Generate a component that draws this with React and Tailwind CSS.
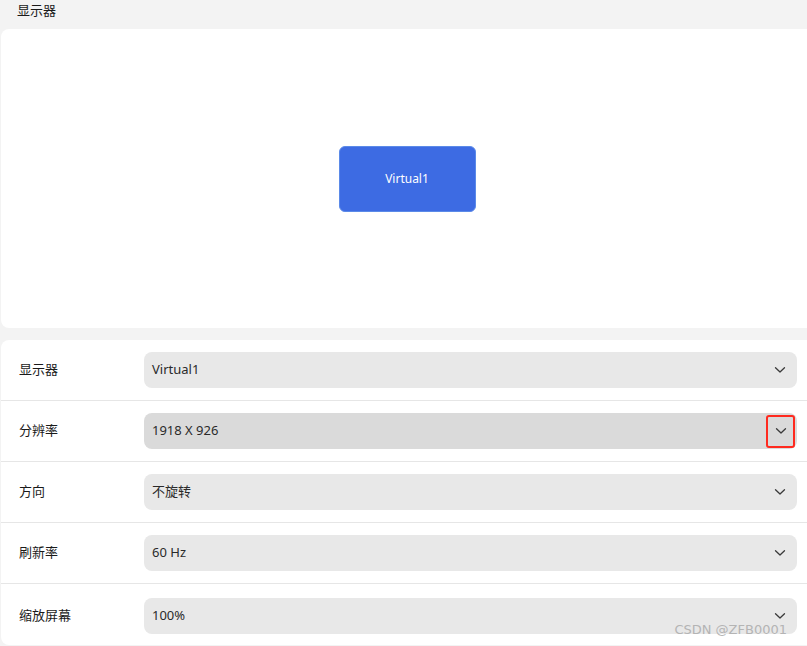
import React from 'react';

const font = { fontFamily: '"Noto Sans", "Noto Sans CJK SC", sans-serif' };

const Chevron = () => (
    <svg width="12" height="8" viewBox="0 0 12 8" fill="none">
        <path d="M1.5 1.8 L6 6 L10.5 1.8" stroke="#3a3a3a" strokeWidth="1.3" strokeLinecap="round" strokeLinejoin="round" />
    </svg>
);

const rows = [
    { label: '显示器', value: 'Virtual1' },
    { label: '分辨率', value: '1918 X 926', active: true },
    { label: '方向', value: '不旋转' },
    { label: '刷新率', value: '60 Hz' },
    { label: '缩放屏幕', value: '100%', pad: 'pt-[2px]' },
];

const Row = ({ label, value, active, last, pad }) => (
    <div className={"flex items-center h-[61px] pl-[18px] pr-[10px] " + (pad || "") + (last ? "" : " border-b border-[#e6e6e6]")}>
        <div className="w-[125px] text-[13px] text-[#1a1a1a]">{label}</div>
        <div
            className={
                "flex-1 h-[36px] rounded-lg flex items-center justify-between pl-2 pr-[11px] text-[13px] text-[#2a2a2a] " +
                (active ? "bg-[#dadada]" : "bg-[#e8e8e8]")
            }
        >
            <span>{value}</span>
            {active ? (
                <span className="relative -mr-[9px] w-[29px] h-[33px] border-2 border-[#ff2a1f] rounded-[3px] flex items-center justify-center">
                    <Chevron />
                </span>
            ) : (
                <Chevron />
            )}
        </div>
    </div>
);

const App = () => {
    return (
        <div className="relative w-[807px] h-[646px] overflow-hidden bg-[#f3f3f3]" style={font}>
            <div className="h-[29px] pl-[17px] text-[13px] leading-[20px] text-[#1a1a1a]">显示器</div>
            <div className="ml-[1px] -mr-3 h-[299px] bg-white rounded-lg flex items-center justify-center">
                <div className="w-[137px] h-[66px] -ml-[6px] bg-[#3d6be3] border border-[#5b8ae8] rounded-[6px] flex items-center justify-center text-white text-[12px]">
                    Virtual1
                </div>
            </div>
            <div className="mt-[12px] ml-[1px] -mr-3 pr-3 bg-white rounded-lg">
                {rows.map((r, i) => (
                    <Row key={r.label} {...r} last={i === rows.length - 1} />
                ))}
            </div>
            <div
                className="absolute right-[20px] bottom-[7px] text-[13px] text-[#b4b4b4]"
                style={{ fontFamily: '"DejaVu Sans", sans-serif' }}
            >
                CSDN @ZFB0001
            </div>
        </div>
    );
};

export default App;
